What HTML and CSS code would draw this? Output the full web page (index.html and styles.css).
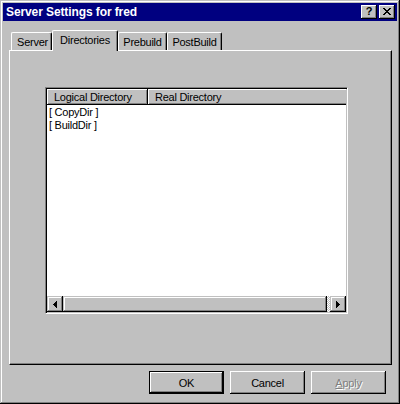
FILE: index.html
```html
<!DOCTYPE html>
<html>
<head>
<meta charset="utf-8">
<link rel="stylesheet" href="styles.css">
</head>
<body>
<div class="window">
  <div class="titlebar">
    <span class="title">Server Settings for fred</span>
    <div class="caption-btns">
      <span class="cbtn help">?</span>
      <span class="cbtn close"><svg width="8" height="7" viewBox="0 0 8 7" shape-rendering="crispEdges"><path d="M0 0h2v1H0z M6 0h2v1H6z M1 1h2v1H1z M5 1h2v1H5z M2 2h4v1H2z M3 3h2v1H3z M2 4h4v1H2z M1 5h2v1H1z M5 5h2v1H5z M0 6h2v1H0z M6 6h2v1H6z" fill="#000"/></svg></span>
    </div>
  </div>
  <div class="body">
    <div class="tabs">
      <div class="tab tab-server">Server</div>
      <div class="tab tab-dirs selected">Directories</div>
      <div class="tab tab-pre">Prebuild</div>
      <div class="tab tab-post">PostBuild</div>
    </div>
    <div class="panel">
      <div class="listview">
        <div class="header">
          <div class="col col-logical">Logical Directory</div>
          <div class="col col-real">Real Directory</div>
        </div>
        <div class="rows">
          <div class="row">[ CopyDir ]</div>
          <div class="row">[ BuildDir ]</div>
        </div>
        <div class="hscroll">
          <div class="sbtn"><svg width="4" height="7" viewBox="0 0 4 7" shape-rendering="crispEdges"><path d="M3 0h1v7H3z M2 1h1v5H2z M1 2h1v3H1z M0 3h1v1H0z" fill="#000"/></svg></div>
          <div class="track"><div class="thumb"></div></div>
          <div class="sbtn"><svg width="4" height="7" viewBox="0 0 4 7" shape-rendering="crispEdges"><path d="M0 0h1v7H0z M1 1h1v5H1z M2 2h1v3H2z M3 3h1v1H3z" fill="#000"/></svg></div>
        </div>
      </div>
    </div>
    <div class="buttons">
      <div class="btn default"><span class="btn-inner">OK</span></div>
      <div class="btn"><span class="btn-inner">Cancel</span></div>
      <div class="btn disabled"><span class="btn-inner"><u>A</u>pply</span></div>
    </div>
  </div>
</div>
</body>
</html>
```

FILE: styles.css
```css
html, body {
  margin: 0;
  padding: 0;
  background: #c0c0c0;
}

body {
  font-family: "Liberation Sans", Arial, sans-serif;
  font-size: 11px;
  letter-spacing: -0.25px;
  color: #000;
}

.window {
  width: 400px;
  height: 404px;
  box-sizing: border-box;
  padding: 3px;
  background: #c0c0c0;
  box-shadow: inset -1px -1px #000, inset 1px 1px #c0c0c0, inset -2px -2px #808080, inset 2px 2px #fff;
  display: flex;
  flex-direction: column;
}

.titlebar {
  height: 18px;
  flex: none;
  background: #000080;
  display: flex;
  align-items: center;
  justify-content: space-between;
  padding: 0 2px 0 3px;
}

.title {
  color: #fff;
  font-weight: bold;
  font-size: 12px;
  letter-spacing: -0.1px;
  line-height: 17px;
  padding-top: 1px;
  white-space: nowrap;
}

.caption-btns {
  display: flex;
  gap: 2px;
}

.cbtn {
  width: 16px;
  height: 14px;
  box-sizing: border-box;
  background: #c0c0c0;
  box-shadow: inset -1px -1px #000, inset 1px 1px #fff, inset -2px -2px #808080;
  display: flex;
  align-items: center;
  justify-content: center;
}

.help {
  font-weight: bold;
  font-size: 11px;
  line-height: 11px;
  letter-spacing: 0;
  padding: 0 0 1px 0;
}

.close svg {
  display: block;
  margin-top: -1px;
}

.body {
  flex: none;
  display: flex;
  flex-direction: column;
  padding: 9px 5px 0 6px;
}

.tabs {
  height: 20px;
  display: flex;
  align-items: flex-end;
  padding-left: 2px;
}

.tab {
  height: 18px;
  box-sizing: border-box;
  border-style: solid;
  border-width: 1px 1px 0 1px;
  border-color: #fff #000 #fff #fff;
  border-radius: 2px 2px 0 0;
  box-shadow: inset -1px 0 #808080;
  background: #c0c0c0;
  padding-top: 3px;
  line-height: 13px;
  text-align: center;
  white-space: nowrap;
}

.tab-server { width: 41px; padding-left: 2px; }
.tab-dirs { width: 66px; }
.tab-pre { width: 49px; }
.tab-post { width: 55px; }

.tab.selected {
  height: 21px;
  margin-bottom: -1px;
  position: relative;
  z-index: 1;
}

.panel {
  height: 315px;
  box-sizing: border-box;
  border: 1px solid;
  border-color: #fff #000 #000 #fff;
  box-shadow: inset -1px -1px #808080;
  padding: 36px 0 0 35px;
}

.listview {
  width: 303px;
  height: 227px;
  box-sizing: border-box;
  border: 1px solid;
  border-color: #808080 #fff #fff #808080;
  box-shadow: inset 1px 1px #000, inset -1px -1px #c0c0c0;
  padding: 1px;
  display: flex;
  flex-direction: column;
  background: #fff;
}

.header {
  height: 16px;
  flex: none;
  display: flex;
  overflow: hidden;
  background: #c0c0c0;
}

.col {
  flex: none;
  height: 16px;
  box-sizing: border-box;
  background: #c0c0c0;
  box-shadow: inset -1px -1px #000, inset 1px 1px #fff, inset -2px -2px #808080;
  padding: 2px 0 0 7px;
  line-height: 13px;
  white-space: nowrap;
}

.col-logical { width: 101px; }
.col-real { width: 220px; }

.rows {
  flex: 1;
  padding-top: 1px;
  background: #fff;
}

.row {
  line-height: 13px;
  padding-left: 2px;
  white-space: nowrap;
}

.hscroll {
  height: 16px;
  flex: none;
  display: flex;
}

.sbtn {
  width: 16px;
  height: 16px;
  flex: none;
  box-sizing: border-box;
  background: #c0c0c0;
  box-shadow: inset -1px -1px #000, inset 1px 1px #c0c0c0, inset -2px -2px #808080, inset 2px 2px #fff;
  display: flex;
  align-items: center;
  justify-content: center;
}

.sbtn svg {
  display: block;
}

.track {
  flex: 1;
  display: flex;
  background: repeating-conic-gradient(#c0c0c0 0 25%, #fff 0 50%) 0 0 / 2px 2px;
}

.thumb {
  width: 264px;
  height: 16px;
  box-sizing: border-box;
  background: #c0c0c0;
  box-shadow: inset -1px -1px #000, inset 1px 1px #c0c0c0, inset -2px -2px #808080, inset 2px 2px #fff;
}

.buttons {
  height: 23px;
  margin-top: 6px;
  display: flex;
  justify-content: flex-end;
  gap: 6px;
  padding-right: 6px;
}

.btn {
  width: 75px;
  height: 23px;
  box-sizing: border-box;
  background: #c0c0c0;
  box-shadow: inset -1px -1px #000, inset 1px 1px #fff, inset -2px -2px #808080;
  display: flex;
  align-items: center;
  justify-content: center;
  line-height: 13px;
}

.btn.default {
  border: 1px solid #000;
  box-shadow: inset -1px -1px #000, inset 1px 1px #fff, inset -2px -2px #808080;
}

.btn.disabled {
  color: #808080;
  text-shadow: 1px 1px 0 #fff;
}

.btn-inner {
  display: block;
  padding-top: 1px;
}
```
